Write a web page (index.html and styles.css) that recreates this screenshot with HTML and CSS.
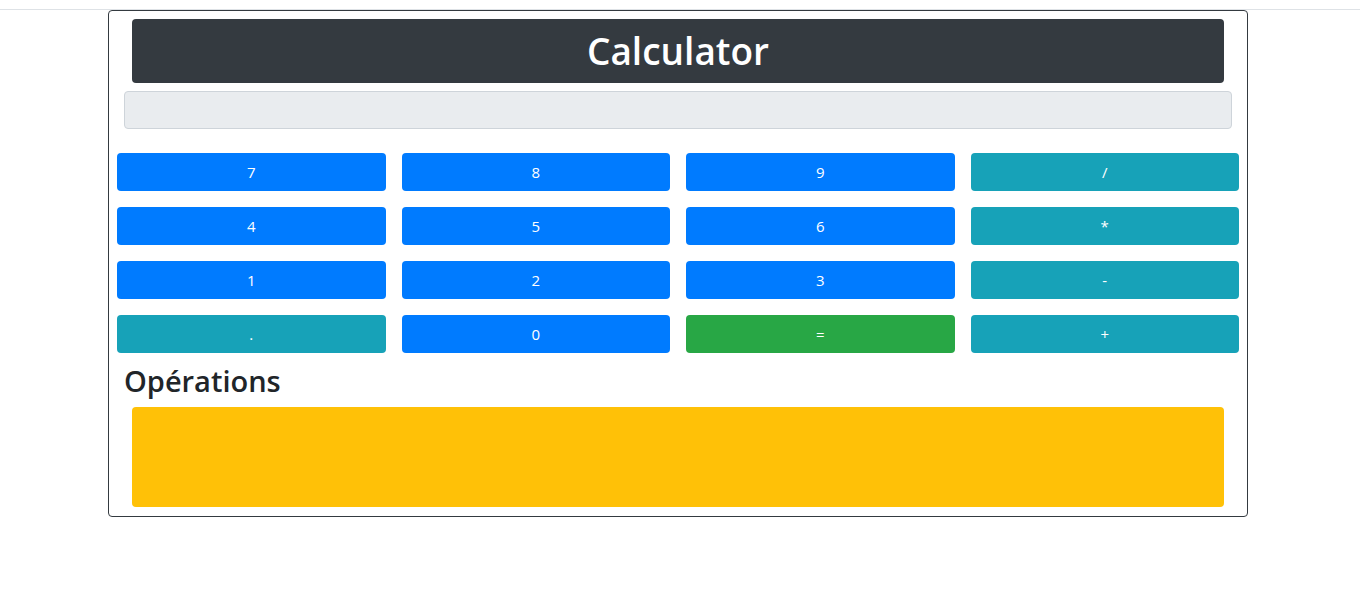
FILE: index.html
```html
<!DOCTYPE html>
<html lang="fr">
<head>
<meta charset="utf-8">
<title>Calculator</title>
<link rel="stylesheet" href="styles.css">
</head>
<body>
<div class="topbar"></div>
<div class="calc">
  <h1 class="title">Calculator</h1>
  <div class="display"></div>
  <div class="keys">
    <button class="key num">7</button>
    <button class="key num">8</button>
    <button class="key num">9</button>
    <button class="key op">/</button>
    <button class="key num">4</button>
    <button class="key num">5</button>
    <button class="key num">6</button>
    <button class="key op">*</button>
    <button class="key num">1</button>
    <button class="key num">2</button>
    <button class="key num">3</button>
    <button class="key op">-</button>
    <button class="key op">.</button>
    <button class="key num">0</button>
    <button class="key eq">=</button>
    <button class="key op">+</button>
  </div>
  <h3 class="ops-title">Opérations</h3>
  <div class="ops"></div>
</div>
</body>
</html>
```
FILE: styles.css
```css
* { box-sizing: border-box; }
body {
  margin: 0;
  font-family: "Open Sans", "Noto Sans", sans-serif;
  color: #212529;
  background: #fff;
}
.topbar {
  height: 10px;
  border-bottom: 1px solid #dee2e6;
}
.calc {
  width: 1140px;
  margin: 0 0 0 108px;
  border: 1px solid #343a40;
  border-radius: 4px;
  padding: 8px 0 9px;
}
.title {
  margin: 0 23px;
  background: #343a40;
  color: #fff;
  border-radius: 4px;
  text-align: center;
  font-size: 37px;
  font-weight: 600;
  line-height: 48px;
  padding: 8px 0;
  height: 64px;
}
.display {
  margin: 8px 15px 0;
  height: 38px;
  background: #e9ecef;
  border: 1px solid #ced4da;
  border-radius: 4px;
}
.keys {
  margin: 24px 8px 0;
  display: grid;
  grid-template-columns: repeat(4, 1fr);
  gap: 16px;
}
.key {
  height: 38px;
  border: 0;
  border-radius: 4px;
  color: #fff;
  font-family: inherit;
  font-size: 15px;
  padding: 0;
}
.num { background: #007bff; }
.op { background: #17a2b8; }
.eq { background: #28a745; }
.ops-title {
  margin: 10px 15px 8px;
  font-size: 29px;
  font-weight: 600;
  line-height: 36px;
  height: 36px;
}
.ops {
  margin: 0 23px;
  height: 100px;
  background: #ffc107;
  border-radius: 4px;
}
```
